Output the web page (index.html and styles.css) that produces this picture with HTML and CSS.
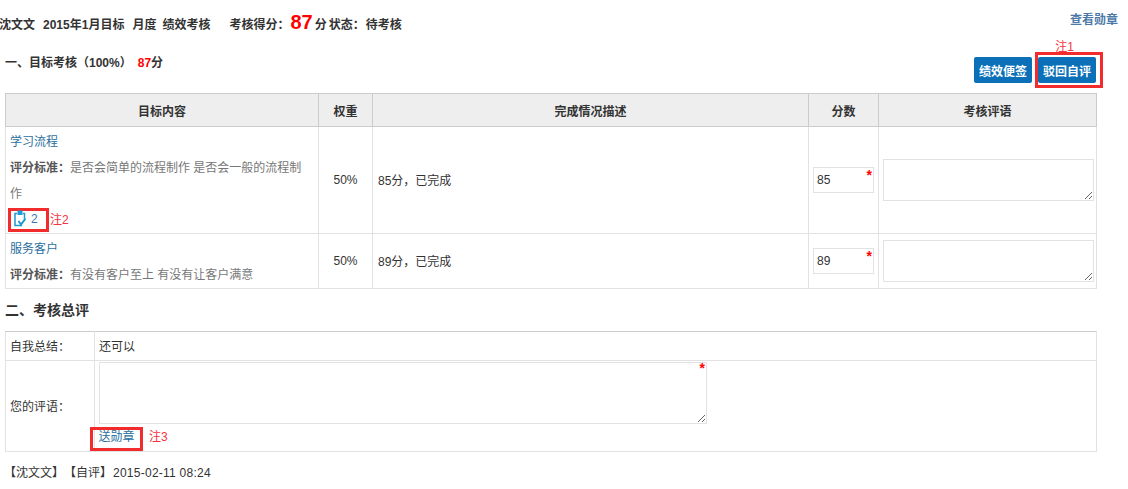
FILE: index.html
```html
<!DOCTYPE html>
<html lang="zh">
<head>
<meta charset="utf-8">
<title>绩效考核</title>
<link rel="stylesheet" href="styles.css">
</head>
<body>
<div class="page">
  <div class="summary">
    <div class="summary-line">
      <span>沈文文</span><span class="g-name">2015年1月目标</span><span class="g-name">月度</span><span class="g-type">绩效考核</span>
      <span class="score-label">考核得分：</span><span class="big">87</span><span>分</span><span class="status">状态：</span><span class="gap-s">待考核</span>
    </div>
    <a class="view-medal">查看勋章</a>
  </div>

  <div class="section-row">
    <div class="section-one">一、目标考核（100%）<span class="red">87</span>分</div>
    <div class="actions">
      <button class="btn">绩效便签</button>
      <button class="btn btn-marked">驳回自评</button>
      <span class="note note-1">注1</span>
    </div>
  </div>

  <table class="goals">
    <colgroup><col class="c1"><col class="c2"><col class="c3"><col class="c4"><col class="c5"></colgroup>
    <thead>
      <tr><th>目标内容</th><th>权重</th><th>完成情况描述</th><th>分数</th><th>考核评语</th></tr>
    </thead>
    <tbody>
      <tr class="row-a">
        <td class="goal">
          <a class="goal-title">学习流程</a>
          <p class="criteria"><b>评分标准：</b>是否会简单的流程制作 是否会一般的流程制作</p>
          <div class="attach">
            <span class="attach-box">
              <svg class="clip" width="12" height="17" viewBox="0 0 12 17" aria-hidden="true">
                <path d="M3 3.500H1V15.500H8M10.500 9V3.500H9" fill="none" stroke="#1e9bd0" stroke-width="1.500"/>
                <path d="M3.500 0.500H8.500V5H3.500Z" fill="#1e9bd0"/>
                <path d="M4.500 11L7 14.500 11.500 8.500" fill="none" stroke="#1e9bd0" stroke-width="2"/>
              </svg>
              <span class="count">2</span>
            </span>
            <span class="note note-2">注2</span>
          </div>
        </td>
        <td class="center">50%</td>
        <td class="desc">85分，已完成</td>
        <td><span class="score"><input class="score-input" value="85"><i class="star">*</i></span></td>
        <td><textarea class="comment"></textarea></td>
      </tr>
      <tr class="row-b">
        <td class="goal">
          <a class="goal-title">服务客户</a>
          <p class="criteria"><b>评分标准：</b>有没有客户至上 有没有让客户满意</p>
        </td>
        <td class="center">50%</td>
        <td class="desc">89分，已完成</td>
        <td><span class="score"><input class="score-input" value="89"><i class="star">*</i></span></td>
        <td><textarea class="comment"></textarea></td>
      </tr>
    </tbody>
  </table>

  <h2 class="section-two">二、考核总评</h2>

  <table class="overall">
    <colgroup><col class="o1"><col></colgroup>
    <tr class="self"><td>自我总结：</td><td>还可以</td></tr>
    <tr class="yours">
      <td class="yours-label">您的评语：</td>
      <td class="yours-cell">
        <span class="big-wrap"><textarea class="big-area"></textarea><i class="star star-big">*</i></span>
        <div class="medal-row"><a class="medal">送勋章</a><span class="note note-3">注3</span></div>
      </td>
    </tr>
  </table>

  <div class="foot">【沈文文】【自评】<span class="stamp">2015-02-11 08:24</span></div>
</div>
</body>
</html>
```

FILE: styles.css
```css
*, *::before, *::after { box-sizing: border-box; }
html, body { margin: 0; padding: 0; background: #fff; }
body {
  font-family: "Liberation Sans", "Noto Sans CJK SC", sans-serif;
  font-size: 12px;
  color: #333;
  overflow: hidden;
  text-spacing-trim: space-all;
}
.page { width: 1128px; height: 489px; }
.summary {
  display: flex;
  justify-content: space-between;
  height: 40px;
  padding-right: 10px;
}
.summary-line {
  display: flex;
  align-items: baseline;
  height: 38px;
  padding-top: 11px;
  margin-left: -1px;
  font-weight: bold;
  white-space: nowrap;
}
.g-name { margin-left: 8px; }
.g-type { margin-left: 6px; }
.gap-s { margin-left: 1px; }
.score-label { margin-left: 19px; }
.big { font-size: 20px; color: #f00; margin: 0 2px 0 1px; }
.status { margin-left: 2px; }
.view-medal {
  font-weight: bold;
  color: #4d79a8;
  padding-top: 12px;
  line-height: 16px;
}
.section-row {
  display: flex;
  justify-content: space-between;
  height: 53px;
  padding-right: 32px;
}
.section-one {
  font-weight: bold;
  padding: 15px 0 0 5px;
  line-height: 16px;
}
.red { color: #f00; margin-left: 6px; }
.actions {
  position: relative;
  display: flex;
  gap: 6px;
  align-items: flex-start;
  padding-top: 17px;
}
.btn {
  width: 58px;
  height: 26px;
  padding: 0;
  border: 0;
  border-radius: 2px;
  background: #0b70b8;
  color: #fff;
  font: bold 12px "Liberation Sans", "Noto Sans CJK SC", sans-serif;
}
.btn-marked { position: relative; }
.btn-marked::after {
  content: "";
  position: absolute;
  left: -3px;
  top: -5px;
  width: 68px;
  height: 36px;
  border: 3px solid #f22c2c;
}
.note { color: #f5333f; font-size: 12px; }
.note-1 { position: absolute; right: 22px; top: 0; line-height: 14px; }

table { border-collapse: collapse; table-layout: fixed; margin-left: 5px; width: 1092px; }
td, th { border: 1px solid #e2e2e2; padding: 0 4px; }
th {
  background: #eee;
  border-color: #ccc;
  height: 33px;
  font-size: 12px;
  font-weight: bold;
  text-align: center;
}
.c1 { width: 313px; } .c2 { width: 54px; } .c3 { width: 436px; } .c4 { width: 70px; }
.row-a { height: 107px; }
.row-b { height: 55px; }
.center { text-align: center; }
.desc { padding: 0 5px 2px; }
.goal { padding: 2px 6px 0 4px; vertical-align: top; line-height: 26px; }
.goal-title { color: #2a6f9e; display: block; }
.criteria { margin: 0; color: #777; }
.criteria b { color: #555; }
.attach { position: relative; display: flex; height: 24px; margin-top: 1px; }
.attach-box {
  display: flex;
  align-items: center;
  gap: 5px;
  position: relative;
  height: 24px;
  width: 41px;
  margin: 0 0 0 -2px;
  padding-left: 3px;
  border: 3px solid #f22c2c;
}
.clip { flex: none; margin-top: -3px; }
.count { color: #3f78b0; margin-top: -3px; line-height: 16px; }
.note-2 { margin-left: 1px; line-height: 24px; }
.score { position: relative; display: block; }
.score-input {
  display: block;
  width: 61px;
  height: 26px;
  border: 1px solid #e2e2e2;
  padding: 0 3px;
  font: 12px "Liberation Sans", sans-serif;
  color: #333;
  outline: 0;
}
.star {
  position: absolute;
  top: 1px;
  right: 2px;
  color: #f00;
  font-style: normal;
  font-weight: bold;
  font-size: 14px;
  line-height: 14px;
}
.comment {
  display: block;
  width: 211px;
  height: 42px;
  border: 1px solid #e2e2e2;
  outline: 0;
  padding: 2px;
}
.section-two {
  margin: 0;
  height: 42px;
  padding: 13px 0 0 5px;
  font-size: 14px;
  line-height: 16px;
  font-weight: bold;
}
.overall { border-top: 1px solid #ccc; }
.overall tr:first-child td { border-top-color: #ccc; }
.o1 { width: 89px; }
.self { height: 29px; }
.self td { padding-bottom: 2px; }
.yours { height: 91px; }
.yours-label { padding-bottom: 2px; }
.yours-cell { padding: 1px 4px 0; vertical-align: top; }
.big-wrap { position: relative; display: block; width: 608px; height: 62px; }
.big-area {
  display: block;
  width: 608px;
  height: 62px;
  border: 1px solid #e2e2e2;
  outline: 0;
}
.star-big { top: -1px; right: 2px; }
.medal-row {
  display: flex;
  align-items: flex-start;
  margin: 3px 0 0 -9px;
  height: 24px;
}
.medal {
  display: block;
  width: 53px;
  height: 24px;
  border: 3px solid #f22c2c;
  color: #2a6f9e;
  text-align: center;
  line-height: 15px;
  margin-right: 6px;
}
.note-3 { line-height: 20px; }
.foot { padding: 13px 0 0 4px; line-height: 16px; }
.stamp { letter-spacing: 0.25px; margin-left: 1px; }
```
